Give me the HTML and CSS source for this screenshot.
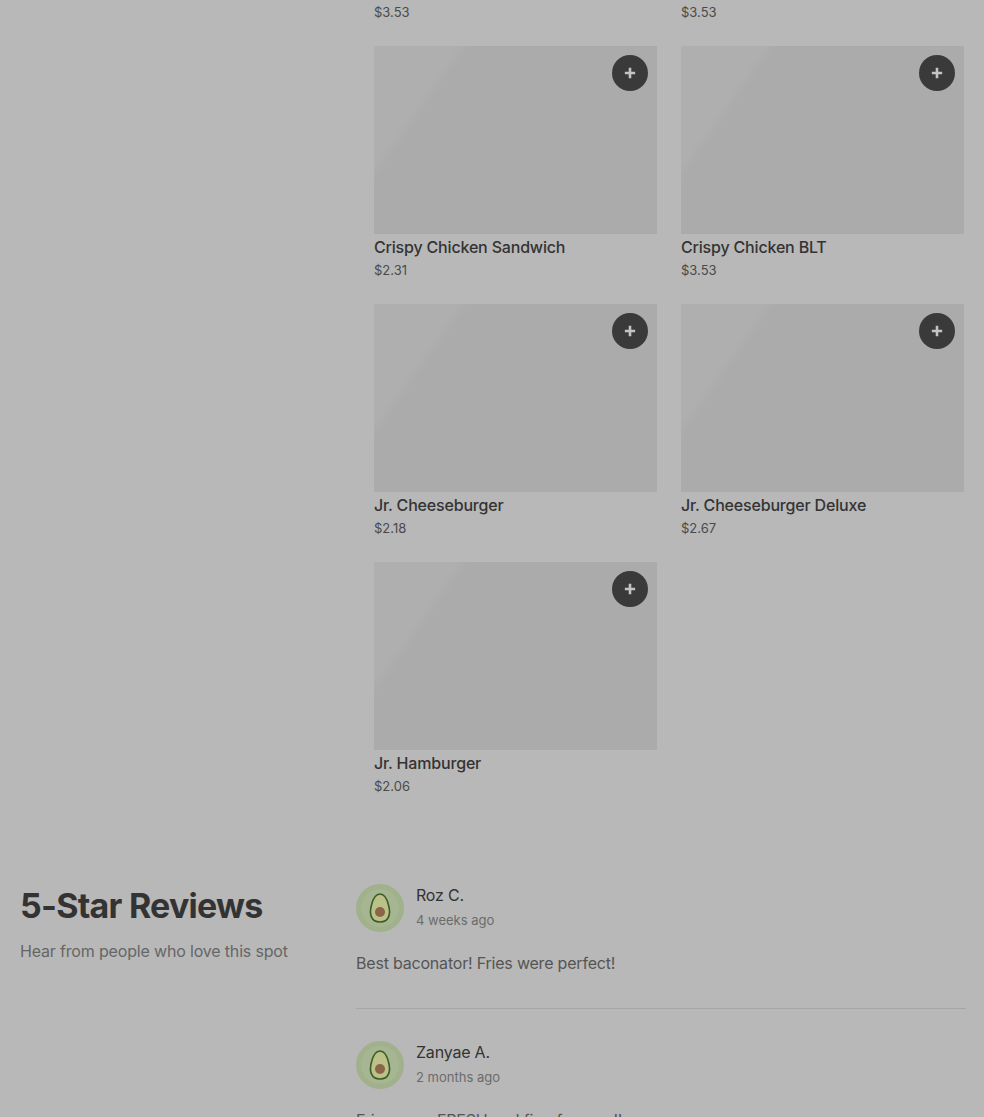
FILE: index.html
```html
<!DOCTYPE html>
<html lang="en">
<head>
    <meta charset="UTF-8">
    <meta name="viewport" content="width=device-width, initial-scale=1.0">
    <title>Menu and reviews</title>
    <link rel="stylesheet" href="styles.css">
</head>
<body>
    <main class="page">
        <section class="menu">
            <article class="item">
                <div class="thumb"><button class="add"><svg viewBox="0 0 14 14"><path d="M7 1v12M1 7h12"/></svg></button></div>
                <h3>Grilled Chicken Wrap</h3>
                <p>$3.53</p>
            </article>
            <article class="item">
                <div class="thumb"><button class="add"><svg viewBox="0 0 14 14"><path d="M7 1v12M1 7h12"/></svg></button></div>
                <h3>Crispy Chicken Club</h3>
                <p>$3.53</p>
            </article>
            <article class="item">
                <div class="thumb"><button class="add"><svg viewBox="0 0 14 14"><path d="M7 1v12M1 7h12"/></svg></button></div>
                <h3>Crispy Chicken Sandwich</h3>
                <p>$2.31</p>
            </article>
            <article class="item">
                <div class="thumb"><button class="add"><svg viewBox="0 0 14 14"><path d="M7 1v12M1 7h12"/></svg></button></div>
                <h3>Crispy Chicken BLT</h3>
                <p>$3.53</p>
            </article>
            <article class="item">
                <div class="thumb"><button class="add"><svg viewBox="0 0 14 14"><path d="M7 1v12M1 7h12"/></svg></button></div>
                <h3>Jr. Cheeseburger</h3>
                <p>$2.18</p>
            </article>
            <article class="item">
                <div class="thumb"><button class="add"><svg viewBox="0 0 14 14"><path d="M7 1v12M1 7h12"/></svg></button></div>
                <h3>Jr. Cheeseburger Deluxe</h3>
                <p>$2.67</p>
            </article>
            <article class="item">
                <div class="thumb"><button class="add"><svg viewBox="0 0 14 14"><path d="M7 1v12M1 7h12"/></svg></button></div>
                <h3>Jr. Hamburger</h3>
                <p>$2.06</p>
            </article>
        </section>

        <section class="reviews">
            <div class="reviews-head">
                <h2>5-Star Reviews</h2>
                <p>Hear from people who love this spot</p>
            </div>
            <div class="reviews-list">
                <div class="review">
                    <div class="reviewer">
                        <svg class="avatar" viewBox="0 0 48 48">
                            <circle cx="24" cy="24" r="24" fill="#a0b18c"/>
                            <circle cx="24" cy="24" r="19" fill="#a6b592"/>
                            <path d="M24 10C19 10 17 15 15.500 21C13 30 15 38 24 38C33 38 35 30 32.500 21C31 15 29 10 24 10z" fill="#bcc089" stroke="#3b5c24" stroke-width="1.600"/>
                            <circle cx="24" cy="28" r="5" fill="#8a6547"/>
                        </svg>
                        <div>
                            <div class="name">Roz C.</div>
                            <div class="when">4 weeks ago</div>
                        </div>
                    </div>
                    <p class="quote">Best baconator! Fries were perfect!</p>
                </div>
                <div class="review">
                    <div class="reviewer">
                        <svg class="avatar" viewBox="0 0 48 48">
                            <circle cx="24" cy="24" r="24" fill="#a0b18c"/>
                            <circle cx="24" cy="24" r="19" fill="#a6b592"/>
                            <path d="M24 10C19 10 17 15 15.500 21C13 30 15 38 24 38C33 38 35 30 32.500 21C31 15 29 10 24 10z" fill="#bcc089" stroke="#3b5c24" stroke-width="1.600"/>
                            <circle cx="24" cy="28" r="5" fill="#8a6547"/>
                        </svg>
                        <div>
                            <div class="name">Zanyae A.</div>
                            <div class="when">2 months ago</div>
                        </div>
                    </div>
                    <p class="quote">Fries were FRESH and fire, for sure!!</p>
                </div>
            </div>
        </section>
    </main>
</body>
</html>
```

FILE: styles.css
```css
html, body {
    margin: 0;
    height: 1117px;
    overflow: hidden;
    background-color: #b8b8b8;
}
body {
    font-family: Inter, "Liberation Sans", sans-serif;
    color: #333;
}
.page {
    margin-top: -212px;
    padding: 0 18px 0 20px;
}
.menu {
    display: grid;
    grid-template-columns: 283px 283px;
    column-gap: 24px;
    row-gap: 23px;
    margin-left: 354px;
}
.thumb {
    position: relative;
    height: 188px;
    background-color: #ababab;
    background-image: linear-gradient(125deg, #afafaf 0, #afafaf 20%, #ababab 23%);
}
.add {
    position: absolute;
    top: 9px;
    right: 9px;
    display: flex;
    align-items: center;
    justify-content: center;
    width: 36px;
    height: 36px;
    padding: 0;
    border: none;
    border-radius: 50%;
    background-color: #3a3a3a;
}
.add svg {
    width: 12px;
    height: 12px;
    fill: none;
    stroke: #c4c4c4;
    stroke-width: 3;
}
.item h3 {
    margin: 2px 0 0;
    font-size: 16px;
    line-height: 22px;
    font-weight: 500;
    letter-spacing: -0.18px;
}
.item p {
    margin: 1px 0 0;
    font-size: 13px;
    line-height: 22px;
    color: #4a4a4a;
}
.reviews {
    display: flex;
    margin-top: 87px;
}
.reviews-head {
    width: 336px;
    flex-shrink: 0;
}
.reviews-head h2 {
    margin: 0;
    font-size: 34px;
    line-height: 44px;
    font-weight: 700;
    letter-spacing: -0.75px;
}
.reviews-head p {
    margin: 12px 0 0;
    font-size: 16px;
    line-height: 22px;
    letter-spacing: -0.17px;
    color: #666;
}
.reviews-list {
    flex: 1;
}
.review {
    padding-bottom: 34px;
    margin-bottom: 32px;
    border-bottom: 1px solid #a6a6a6;
}
.reviewer {
    display: flex;
    align-items: flex-start;
    gap: 12px;
}
.avatar {
    width: 48px;
    height: 48px;
}
.name {
    font-size: 16px;
    line-height: 22px;
    letter-spacing: -0.2px;
}
.when {
    margin-top: 3px;
    font-size: 13px;
    line-height: 22px;
    color: #6b6b6b;
}
.quote {
    margin: 20px 0 0;
    font-size: 16px;
    line-height: 22px;
    letter-spacing: -0.2px;
    color: #555;
}
```
